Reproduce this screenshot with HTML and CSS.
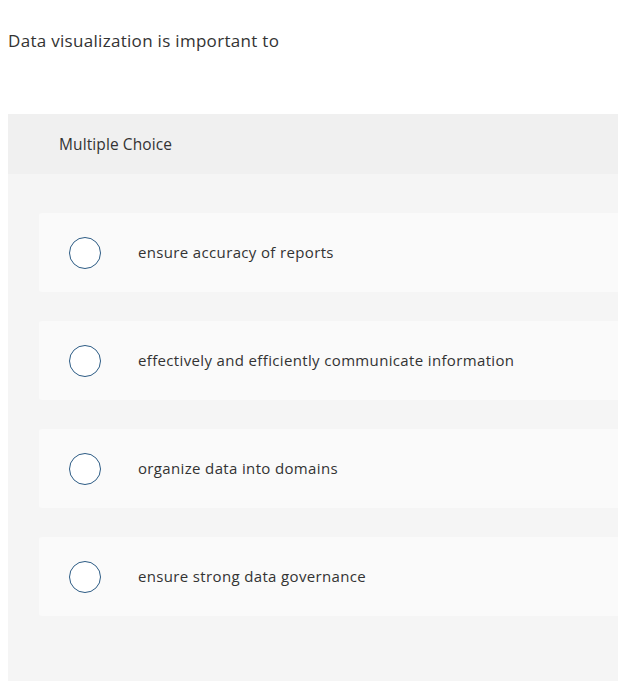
FILE: index.html
```html
<!DOCTYPE html>
<html>
<head>
<meta charset="utf-8">
<link rel="stylesheet" href="styles.css">
</head>
<body>
<p class="question">Data visualization is important to</p>
<div class="panel">
  <div class="panel-head">Multiple Choice</div>
  <div class="panel-body">
    <div class="option"><span class="radio"></span><span class="label">ensure accuracy of reports</span></div>
    <div class="option"><span class="radio"></span><span class="label">effectively and efficiently communicate information</span></div>
    <div class="option"><span class="radio"></span><span class="label">organize data into domains</span></div>
    <div class="option"><span class="radio"></span><span class="label">ensure strong data governance</span></div>
  </div>
</div>
</body>
</html>
```
FILE: styles.css
```css
html, body { overflow-x: hidden; }
body {
  margin: 0;
  padding: 0 0 0 8px;
  background: #fff;
  font-family: "Open Sans", Lato, sans-serif;
  color: #333;
}
.question {
  margin: 0;
  padding-top: 30px;
  height: 114px;
  box-sizing: border-box;
  font-size: 17px;
  letter-spacing: 0.3px;
  line-height: 22px;
  color: #333;
}
.panel {
  background: #f5f5f5;
}
.panel-head {
  background: #f0f0f0;
  height: 60px;
  padding-left: 51px;
  display: flex;
  align-items: center;
  font-size: 15.5px;
  letter-spacing: 0.1px;
  color: #333;
}
.panel-body {
  padding: 39px 0 65px 31px;
  display: flex;
  flex-direction: column;
  gap: 29px;
}
.option {
  background: #fafafa;
  height: 79px;
  display: flex;
  align-items: center;
  border-radius: 3px 0 0 3px;
}
.radio {
  width: 30px;
  height: 30px;
  border: 1.5px solid #2c5b84;
  border-radius: 50%;
  margin-left: 30px;
  background: #fff;
  flex: none;
}
.label {
  margin-left: 37px;
  padding-bottom: 2px;
  font-size: 15px;
  letter-spacing: 0.35px;
  color: #333;
}
```
